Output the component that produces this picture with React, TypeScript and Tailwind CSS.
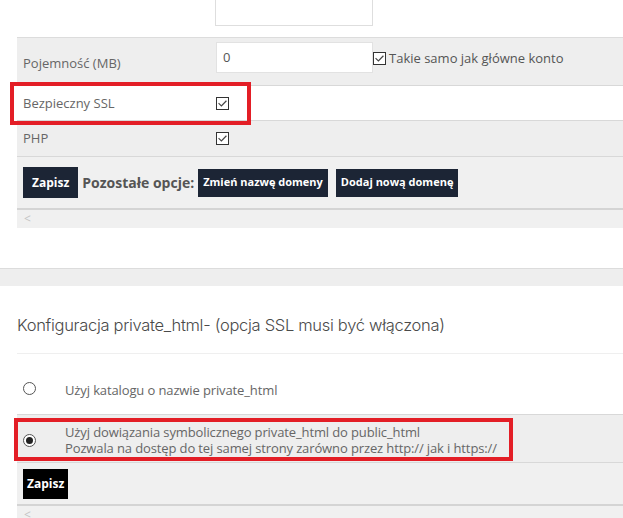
import React from "react";

function Check({ className = "" }: { className?: string }) {
  return (
    <span className={"inline-flex h-[13px] w-[13px] shrink-0 items-center justify-center border border-[#333] bg-white " + className}>
      <svg width="11" height="11" viewBox="0 0 11 11" fill="none">
        <path d="M2 5.6 L4.4 8 L9 3.2" stroke="#444" strokeWidth="1.2" strokeLinecap="square" />
      </svg>
    </span>
  );
}

function Radio({ checked }: { checked?: boolean }) {
  return (
    <span className="inline-flex h-[13px] w-[13px] shrink-0 items-center justify-center rounded-full border border-[#555] bg-white">
      {checked && <span className="h-[7px] w-[7px] rounded-full bg-[#222]" />}
    </span>
  );
}

export default function App() {
  return (
    <div className="relative h-[518px] w-[623px] overflow-hidden bg-white text-[13px] text-[#666]" style={{ fontFamily: '"Open Sans", "Liberation Sans", sans-serif' }}>
      {/* top table */}
      <div className="relative ml-[17px]">
        <div className="h-[38px] border-b border-[#dcdcdc] bg-white">
          <div className="ml-[198px] h-[26px] w-[158px] border-x border-b border-[#dedede]" />
        </div>
        <div className="flex h-[48px] items-center border-b border-[#d8d8d8] bg-[#eeeeee]">
          <div className="w-[199px] pl-[6px] pt-[4px]">Pojemność (MB)</div>
          <div className="flex items-start self-start pt-[4px]">
            <div className="flex h-[31px] w-[157px] items-start border border-[#e2e2e2] bg-white pl-[6px] pt-[5px] text-[#555]">0</div>
            <Check className="mt-[10px]" />
            <span className="ml-[3px] mt-[7px] text-[#555]">Takie samo jak główne konto</span>
          </div>
        </div>
        <div className="flex h-[35px] items-center border-b border-[#d8d8d8] bg-white">
          <div className="w-[199px] pl-[6px] pt-[1px]">Bezpieczny SSL</div>
          <Check />
        </div>
        <div className="flex h-[36px] items-center border-b border-[#d8d8d8] bg-[#eeeeee]">
          <div className="w-[199px] pl-[6px] pt-[1px]">PHP</div>
          <Check />
        </div>
        <div className="flex h-[53px] items-center gap-[4px] border-b-2 border-[#d4d4d4] bg-[#f0f0f0] pl-[6px]">
          <button className="h-[31px] bg-[#1c2535] px-[9px] text-[12px] font-bold text-white">Zapisz</button>
          <span className="text-[14px] font-bold text-[#555]">Pozostałe opcje:</span>
          <button className="h-[28px] bg-[#1c2535] px-[5px] text-[11px] font-bold text-white">Zmień nazwę domeny</button>
          <button className="ml-[4px] h-[28px] bg-[#1c2535] px-[5px] text-[11px] font-bold text-white">Dodaj nową domenę</button>
        </div>
        <div className="flex h-[18px] items-center bg-[#f0f0f0] pl-[7px] text-[12px] leading-none text-[#c4c4c4]">&lt;</div>
        <div className="pointer-events-none absolute left-[-7px] top-[82px] h-[43px] w-[241px] border-[4px] border-[#e31e26]" />
      </div>

      <div className="mt-[40px] h-[18px] border-t border-[#dcdcdc] bg-[#eeeeee]" />

      <div className="ml-[17px]">
        <div className="flex h-[68px] items-end border-b border-[#efefef] pb-[15px] text-[16.5px] font-light tracking-[-0.3px] text-[#4a4a4a]" style={{ fontFamily: 'Inter, "Open Sans", sans-serif' }}>
          Konfiguracja private_html- (opcja SSL musi być włączona)
        </div>
        <div className="relative tracking-[-0.12px]">
          <div className="flex h-[61px] items-center border-b border-[#d8d8d8] bg-white pt-[10px]">
            <div className="w-[48px] pl-[6px] pt-[4px]"><Radio /></div>
            <span className="pt-[4px]">Użyj katalogu o nazwie private_html</span>
          </div>
          <div className="flex h-[48px] items-center border-b border-[#d8d8d8] bg-[#eeeeee] pt-[3px]">
            <div className="w-[48px] pl-[6px]"><Radio checked /></div>
            <div className="leading-[16px]">
              <div>Użyj dowiązania symbolicznego private_html do public_html</div>
              <div>Pozwala na dostęp do tej samej strony zarówno przez http:// jak i https://</div>
            </div>
          </div>
          <div className="flex h-[43px] items-center border-b-2 border-[#d4d4d4] bg-[#f0f0f0] pl-[6px]">
            <button className="h-[30px] bg-black px-[4px] text-[12px] font-bold tracking-normal text-white">Zapisz</button>
          </div>
          <div className="flex h-[18px] items-center bg-[#f0f0f0] pl-[7px] text-[12px] leading-none text-[#c4c4c4]">&lt;</div>
          <div className="pointer-events-none absolute left-[-3px] top-[64px] h-[43px] w-[499px] border-[4px] border-[#e31e26]" />
        </div>
      </div>
    </div>
  );
}
